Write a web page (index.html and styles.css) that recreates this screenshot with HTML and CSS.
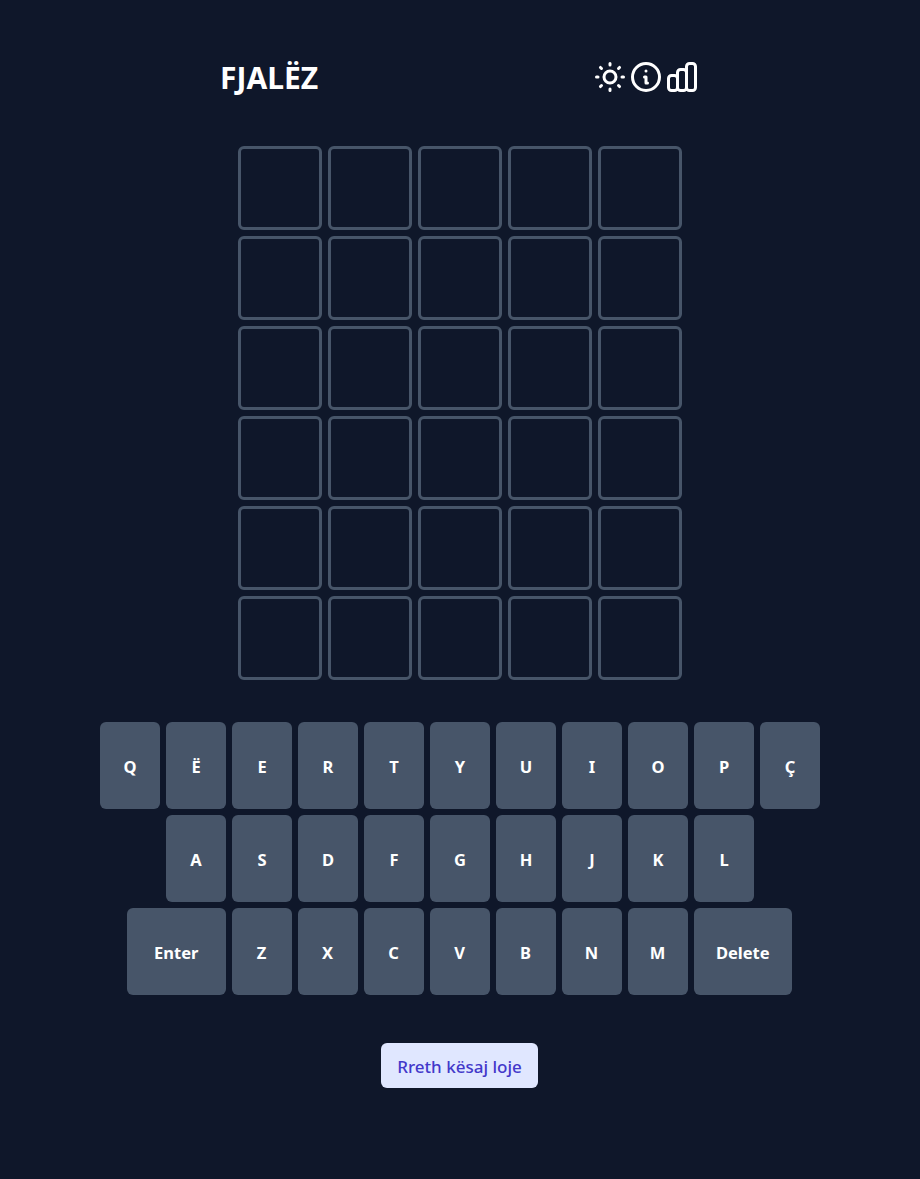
FILE: index.html
```html
<!DOCTYPE html>
<html lang="en">
<head>
    <meta charset="UTF-8">
    <meta name="viewport" content="width=device-width, initial-scale=1.0">
    <title>Fjalëz</title>
    <link rel="stylesheet" href="styles.css">
</head>
<body>
    <header class="navbar">
        <h1 class="title">FJALËZ</h1>
        <div class="nav-icons">
            <svg class="icon" viewBox="0 0 24 24" fill="none" stroke="currentColor" stroke-width="2" stroke-linecap="round" stroke-linejoin="round"><path d="M12 3v1m0 16v1m9-9h-1M4 12H3m15.364 6.364l-.707-.707M6.343 6.343l-.707-.707m12.728 0l-.707.707M6.343 17.657l-.707.707M16 12a4 4 0 11-8 0 4 4 0 018 0z"/></svg>
            <svg class="icon" viewBox="0 0 24 24" fill="none" stroke="currentColor" stroke-width="2" stroke-linecap="round" stroke-linejoin="round"><path d="M13 16h-1v-4h-1m1-4h.01M21 12a9 9 0 11-18 0 9 9 0 0118 0z"/></svg>
            <svg class="icon" viewBox="0 0 24 24" fill="none" stroke="currentColor" stroke-width="2" stroke-linecap="round" stroke-linejoin="round"><path d="M9 19v-6a2 2 0 00-2-2H5a2 2 0 00-2 2v6a2 2 0 002 2h2a2 2 0 002-2zm0 0V9a2 2 0 012-2h2a2 2 0 012 2v10m-6 0a2 2 0 002 2h2a2 2 0 002-2m0 0V5a2 2 0 012-2h2a2 2 0 012 2v14a2 2 0 01-2 2h-2a2 2 0 01-2-2z"/></svg>
        </div>
    </header>

    <main class="board">
        <div class="board-row"><div class="cell"></div><div class="cell"></div><div class="cell"></div><div class="cell"></div><div class="cell"></div></div>
        <div class="board-row"><div class="cell"></div><div class="cell"></div><div class="cell"></div><div class="cell"></div><div class="cell"></div></div>
        <div class="board-row"><div class="cell"></div><div class="cell"></div><div class="cell"></div><div class="cell"></div><div class="cell"></div></div>
        <div class="board-row"><div class="cell"></div><div class="cell"></div><div class="cell"></div><div class="cell"></div><div class="cell"></div></div>
        <div class="board-row"><div class="cell"></div><div class="cell"></div><div class="cell"></div><div class="cell"></div><div class="cell"></div></div>
        <div class="board-row"><div class="cell"></div><div class="cell"></div><div class="cell"></div><div class="cell"></div><div class="cell"></div></div>
    </main>

    <section class="keyboard">
        <div class="key-row">
            <button class="key">Q</button>
            <button class="key">Ë</button>
            <button class="key">E</button>
            <button class="key">R</button>
            <button class="key">T</button>
            <button class="key">Y</button>
            <button class="key">U</button>
            <button class="key">I</button>
            <button class="key">O</button>
            <button class="key">P</button>
            <button class="key">Ç</button>
        </div>
        <div class="key-row">
            <button class="key">A</button>
            <button class="key">S</button>
            <button class="key">D</button>
            <button class="key">F</button>
            <button class="key">G</button>
            <button class="key">H</button>
            <button class="key">J</button>
            <button class="key">K</button>
            <button class="key">L</button>
        </div>
        <div class="key-row key-row-last">
            <button class="key key-wide">Enter</button>
            <button class="key">Z</button>
            <button class="key">X</button>
            <button class="key">C</button>
            <button class="key">V</button>
            <button class="key">B</button>
            <button class="key">N</button>
            <button class="key">M</button>
            <button class="key key-wide">Delete</button>
        </div>
    </section>

    <div class="about">
        <button class="about-btn">Rreth kësaj loje</button>
    </div>
</body>
</html>
```

FILE: styles.css
```css
body {
    margin: 0;
    min-height: 1179px;
    background-color: #0f172a;
    font-family: "Noto Sans", sans-serif;
    color: white;
}
.navbar {
    display: flex;
    justify-content: space-between;
    align-items: center;
    width: 480px;
    height: 36px;
    margin: 0 auto 51px;
    padding-top: 59px;
}
.title {
    margin: 0;
    font-size: 30px;
    font-weight: 700;
}
.nav-icons {
    display: flex;
}
.icon {
    display: block;
    width: 36px;
    height: 36px;
}
.board {
    display: flex;
    flex-direction: column;
    align-items: center;
    gap: 6px;
    margin-bottom: 42px;
}
.board-row {
    display: flex;
    gap: 6px;
}
.cell {
    box-sizing: border-box;
    width: 84px;
    height: 84px;
    border: 3px solid #475569;
    border-radius: 6px;
}
.keyboard {
    display: flex;
    flex-direction: column;
    gap: 6px;
}
.key-row {
    display: flex;
    justify-content: center;
    gap: 6px;
}
.key-row-last {
    padding-right: 1px;
}
.key {
    box-sizing: border-box;
    width: 60px;
    height: 87px;
    padding: 2px 0 0;
    border: none;
    border-radius: 6px;
    background-color: #475569;
    color: white;
    font-family: inherit;
    font-size: 16.5px;
    font-weight: 700;
    cursor: pointer;
}
.key-wide {
    width: 98.5px;
}
.about {
    display: flex;
    justify-content: center;
    margin-top: 48px;
    padding-right: 1px;
}
.about-btn {
    box-sizing: border-box;
    width: 157px;
    height: 45px;
    padding: 2px 0 0;
    border: none;
    border-radius: 6px;
    background-color: #e0e7ff;
    color: #4338ca;
    font-family: inherit;
    font-size: 17px;
    font-weight: 500;
    cursor: pointer;
}
```
